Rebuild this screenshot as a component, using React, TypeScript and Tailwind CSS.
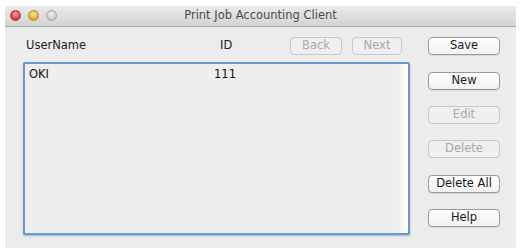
import React from 'react';

function MacButton({ label, disabled, className = '' }: { label: string; disabled?: boolean; className?: string }) {
  return (
    <button
      type="button"
      className={`h-[18px] rounded-[4px] border text-[11.5px] leading-none flex items-center justify-center ${
        disabled
          ? 'border-[#c9c9c9] bg-[#efefef] text-[#a9a9a9]'
          : 'border-[#999999] bg-gradient-to-b from-white to-[#f1f1f1] text-[#1a1a1a] shadow-[0_1px_0_rgba(0,0,0,0.08)]'
      } ${className}`}
    >
      {label}
    </button>
  );
}

export default function App() {
  return (
    <div
      className="w-[521px] h-[248px] bg-white overflow-hidden pt-[6px] pl-[5px]"
      style={{ fontFamily: '"DejaVu Sans", "Liberation Sans", sans-serif' }}
    >
      <div className="w-[511px] h-[242px] bg-[#ececec] flex flex-col">
        {/* title bar */}
        <div className="h-[21px] relative flex items-center justify-center bg-gradient-to-b from-[#ebebeb] to-[#d3d3d3] border-b border-[#a8a8a8]">
          <div className="absolute left-[5px] top-[4px] flex gap-[7px]">
            <span className="w-[11px] h-[11px] rounded-full bg-[radial-gradient(circle_at_50%_35%,#f7a0a0,#d94444_60%,#b02a2a)] border border-[#a33]" />
            <span className="w-[11px] h-[11px] rounded-full bg-[radial-gradient(circle_at_50%_35%,#fbe59a,#e0b33a_60%,#b98a1e)] border border-[#b58a20]" />
            <span className="w-[11px] h-[11px] rounded-full bg-[radial-gradient(circle_at_50%_35%,#f2f2f2,#cfcfcf_60%,#b5b5b5)] border border-[#a9a9a9]" />
          </div>
          <span className="text-[11.5px] text-[#4a4a4a]">Print Job Accounting Client</span>
        </div>

        {/* body */}
        <div className="flex flex-1 pl-[18px] pt-[10px]">
          <div className="w-[387px] flex flex-col">
            <div className="flex items-center h-[18px]">
              <span className="w-[197px] pl-[3px] text-[11.5px] text-[#222]">UserName</span>
              <span className="text-[11.5px] text-[#222]">ID</span>
              <div className="ml-auto mr-[8px] flex gap-[10px]">
                <MacButton label="Back" disabled className="w-[52px]" />
                <MacButton label="Next" disabled className="w-[50px]" />
              </div>
            </div>
            <div className="mt-[7px] h-[173px] border-2 border-[#6d98cc] rounded-[2px] bg-[#eeeeee] flex shadow-[0_1px_2px_rgba(60,100,160,0.4)]">
              <div className="flex-1 flex items-start pt-[2px]">
                <span className="w-[189px] pl-[4px] text-[11.5px] text-[#111]">OKI</span>
                <span className="text-[11.5px] text-[#111]">111</span>
              </div>
              <div className="w-[10px] bg-gradient-to-r from-[#eeeeee] to-white" />
            </div>
          </div>
          <div className="ml-[18px] w-[72px] flex flex-col">
            <MacButton label="Save" />
            <MacButton label="New" className="mt-[17px]" />
            <MacButton label="Edit" disabled className="mt-[16px]" />
            <MacButton label="Delete" disabled className="mt-[16px]" />
            <MacButton label="Delete All" className="mt-[17px]" />
            <MacButton label="Help" className="mt-[16px]" />
          </div>
        </div>
      </div>
    </div>
  );
}
